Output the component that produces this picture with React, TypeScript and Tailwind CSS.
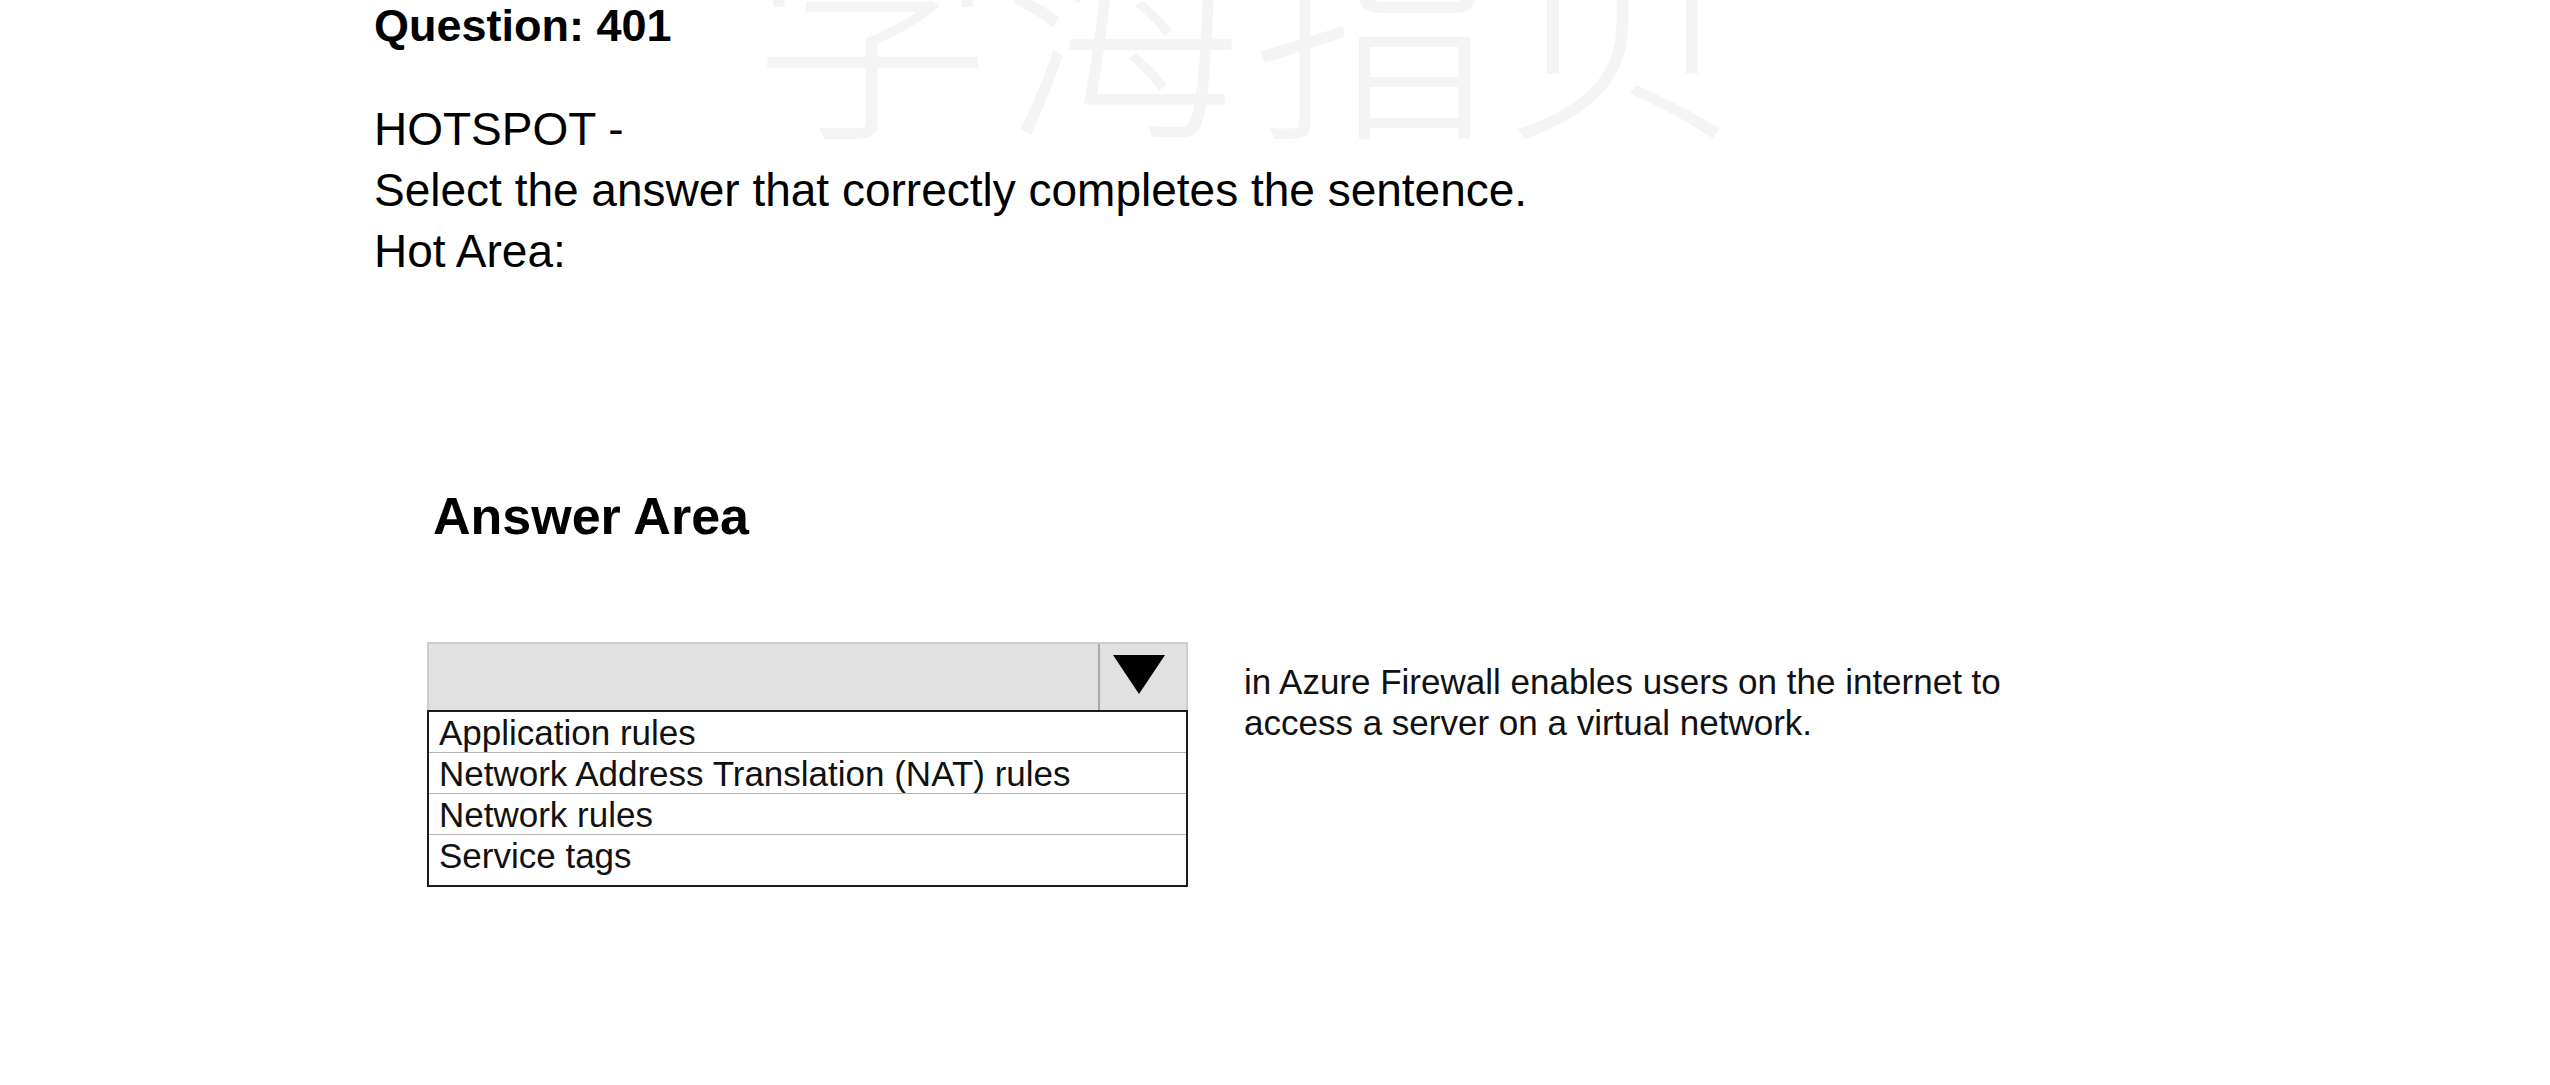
import React from 'react';

const OPTIONS = [
  'Application rules',
  'Network Address Translation (NAT) rules',
  'Network rules',
  'Service tags',
];

const DropdownHotspot: React.FC = () => {
  return (
    <div className="w-[761px] shrink-0">
      {/* closed select header */}
      <div className="flex h-[68px] border-x-2 border-t-2 border-[#cdcdcd] bg-[#e1e1e1]">
        <div className="flex-1" />
        <div className="flex w-[88px] items-center justify-center border-l-2 border-[#a9a9a9] pb-[4px]">
          <svg width="52" height="39" viewBox="0 0 52 39" className="ml-[-8px]">
            <polygon points="0,0 52,0 26,39" fill="#000" />
          </svg>
        </div>
      </div>
      {/* open list */}
      <div className="border-2 border-[#1c1c1c] bg-white pb-[9px]">
        {OPTIONS.map((opt, i) => (
          <div
            key={opt}
            className={`h-[41px] pl-[10px] text-[35px] leading-[41px] text-[#111] ${
              i < OPTIONS.length - 1 ? 'border-b border-[#b4b4b4]' : ''
            }`}
          >
            {opt}
          </div>
        ))}
      </div>
    </div>
  );
};

export default function App() {
  return (
    <div
      className="relative min-h-[1085px] w-full overflow-hidden bg-white text-black"
      style={{ fontFamily: '"Liberation Sans", Arial, sans-serif' }}
    >
      {/* watermark */}
      <div
        className="pointer-events-none absolute left-[752px] top-[-103px] select-none whitespace-nowrap text-[240px] font-extralight leading-none tracking-[10px] text-[#f4f4f4]"
        style={{ fontFamily: '"Noto Sans CJK SC", sans-serif' }}
      >
        学海指贝
      </div>

      <div className="relative pl-[374px]">
        <div className="text-[45px] font-bold leading-[1.15]">Question: 401</div>

        <div className="mt-[47px] text-[46px] leading-[61px]">
          <div>HOTSPOT -</div>
          <div>Select the answer that correctly completes the sentence.</div>
          <div>Hot Area:</div>
        </div>

        <div className="ml-[53px] mt-[209px]">
          <div className="pl-[6px] text-[52px] font-bold leading-[50px]">Answer Area</div>

          <div className="mt-[101px] flex items-start gap-[56px]">
            <DropdownHotspot />
            <p className="mt-[19px] text-[35px] leading-[41px] text-[#111]">
              in Azure Firewall enables users on the internet to
              <br />
              access a server on a virtual network.
            </p>
          </div>
        </div>
      </div>
    </div>
  );
}
